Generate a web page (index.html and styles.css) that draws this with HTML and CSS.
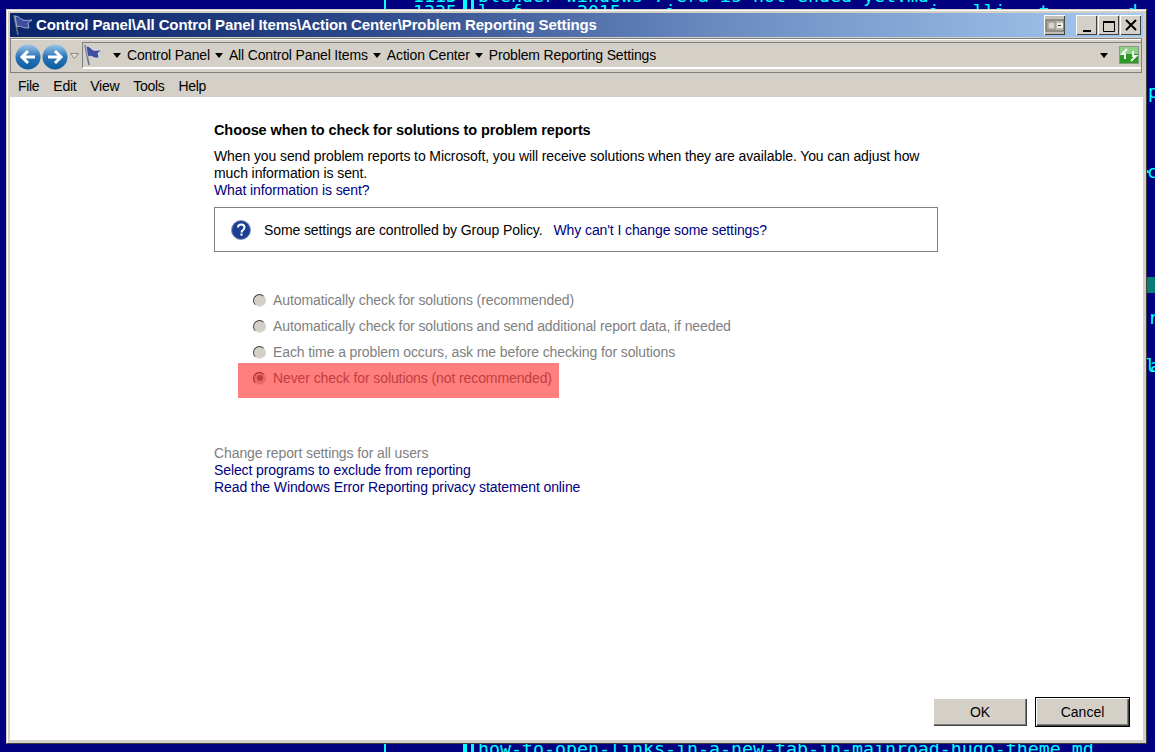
FILE: index.html
```html
<!DOCTYPE html>
<html lang="en">
<head>
<meta charset="utf-8">
<title>Problem Reporting Settings</title>
<link rel="stylesheet" href="styles.css">
</head>
<body>
<div class="term-line row1"><span class="num">1115</span><span class="txt">blender-windows-7-era-is-not-ended-yet.md</span></div>
<div class="term-line row2"><span class="num">1335</span><span class="txt">l  f     2015    i                       i   lli   t       d</span></div>
<div class="term-line row3"><span class="txt">how-to-open-links-in-a-new-tab-in-mainroad-hugo-theme.md</span></div>
<div class="vline v1"></div>
<div class="vline v2"></div>
<div class="vline v3"></div>
<div class="side s1">p</div>
<div class="side s2">·c</div>
<div class="side-block"></div>
<div class="side s3">r</div>
<div class="side s4">la</div>
<div class="window">
  <div class="titlebar">
    <svg class="flag" width="24" height="24" viewBox="0 0 24 24"><path d="M3 2l4 20" stroke="#6a7488" stroke-width="1.5"/><path d="M4 3c4 0 5 3 8 4s5 0 9 0l-4 3 1 5c-3 0-5 0-7-1s-4-1-5 0z" fill="#3c4f9e" stroke="#cfd6ea" stroke-width=".7"/></svg>
    <span class="title">Control Panel\All Control Panel Items\Action Center\Problem Reporting Settings</span>
    <span class="wbtns">
      <span class="sbtn"><svg width="20" height="15" viewBox="0 0 20 15"><rect x="1" y="2" width="18" height="11" fill="#bdb9b0" stroke="#5c5a55"/><rect x="3" y="4" width="7" height="7" fill="#d8d5cc" stroke="#8a8880"/><rect x="12" y="5" width="6" height="5" fill="#eee"/><rect x="13" y="7" width="3" height="1" fill="#333"/></svg></span>
      <span class="capgroup">
      <span class="wbtn"><svg width="12" height="12" viewBox="0 0 12 12"><rect x="2" y="10" width="8" height="2" fill="#000"/></svg></span>
      <span class="wbtn"><svg width="14" height="12" viewBox="0 0 14 12"><path d="M1.5 1.5h11v10h-11z" fill="none" stroke="#000"/><rect x="1" y="1" width="12" height="2" fill="#000"/></svg></span>
      <span class="wbtn closeb"><svg width="12" height="12" viewBox="0 0 12 12"><path d="M1 1l10 10M11 1L1 11" stroke="#000" stroke-width="2"/></svg></span>
      </span>
    </span>
  </div>
  <div class="navbar">
    <span class="navbtn"><svg width="26" height="26" viewBox="0 0 26 26"><defs><linearGradient id="g" x1="0" y1="0" x2="0" y2="1"><stop offset="0" stop-color="#9cc6e8"/><stop offset=".5" stop-color="#2a74b8"/><stop offset="1" stop-color="#0a5ea0"/></linearGradient></defs><circle cx="13" cy="13" r="12.5" fill="url(#g)"/><path d="M20 13H8m5-6l-6 6 6 6" fill="none" stroke="#fff" stroke-width="3"/></svg></span>
    <span class="navbtn"><svg width="26" height="26" viewBox="0 0 26 26"><circle cx="13" cy="13" r="12.5" fill="url(#g)"/><path d="M6 13h12m-5-6l6 6-6 6" fill="none" stroke="#fff" stroke-width="3"/></svg></span>
    <svg class="hist" width="9" height="6" viewBox="0 0 9 6"><path d="M.5.5h8L4.5 5.5z" fill="#e8e6e0" stroke="#8a8880"/></svg>
    <div class="crumbs">
      <svg class="flag2" width="22" height="24" viewBox="0 0 22 24"><path d="M2 2l4 20" stroke="#6a7488" stroke-width="1.5"/><path d="M3 3c4 0 5 3 7 4s5 0 9 0l-4 3 1 5c-3 0-5 0-6-1s-4-1-5 0z" fill="#3c4f9e" stroke="#fff" stroke-width=".5"/></svg>
      <i class="arr"></i><span>Control Panel</span>
      <i class="arr"></i><span>All Control Panel Items</span>
      <i class="arr"></i><span>Action Center</span>
      <i class="arr"></i><span>Problem Reporting Settings</span>
      <i class="arr end"></i>
      <svg class="refresh" width="20" height="18" viewBox="0 0 20 18"><rect x=".5" y=".5" width="19" height="17" fill="#2b9a24" stroke="#8a9a88"/><rect x="1" y="1" width="18" height="7" fill="#8fd184"/><path d="M8 3L3 8h3v5M12 15l5-5h-3V5" fill="none" stroke="#f4f4f4" stroke-width="2"/></svg>
    </div>
  </div>
  <div class="menubar"><span>File</span><span>Edit</span><span>View</span><span>Tools</span><span>Help</span></div>
  <div class="content">
    <main class="main">
      <h1>Choose when to check for solutions to problem reports</h1>
      <p class="intro">When you send problem reports to Microsoft, you will receive solutions when they are available. You can adjust how much information is sent.</p>
      <a class="link">What information is sent?</a>
      <div class="policy">
        <svg width="20" height="20" viewBox="0 0 20 20"><circle cx="10" cy="10" r="9.5" fill="#1c3f94" stroke="#8a97b8"/><path d="M7 7.5c0-4 6.5-4 6.5 0 0 2.5-3 2.5-3 5" fill="none" stroke="#fff" stroke-width="2"/><rect x="9.5" y="13.5" width="2" height="2.2" fill="#fff"/></svg>
        <span class="ptext">Some settings are controlled by Group Policy.</span>
        <a class="link">Why can't I change some settings?</a>
      </div>
      <div class="options">
        <label class="opt"><span class="radio"></span>Automatically check for solutions (recommended)</label>
        <label class="opt"><span class="radio"></span>Automatically check for solutions and send additional report data, if needed</label>
        <label class="opt"><span class="radio"></span>Each time a problem occurs, ask me before checking for solutions</label>
        <label class="opt"><span class="radio on"></span>Never check for solutions (not recommended)<span class="highlight"></span></label>
      </div>
      <div class="links">
        <span class="dis">Change report settings for all users</span>
        <a class="link">Select programs to exclude from reporting</a>
        <a class="link">Read the Windows Error Reporting privacy statement online</a>
      </div>
    </main>
    <div class="buttons"><button class="btn ok">OK</button><button class="btn def">Cancel</button></div>
  </div>
</div>
</body>
</html>
```
FILE: styles.css
```css
* { box-sizing: border-box; }
html, body { margin: 0; height: 100%; }
body { position: relative; width: 1155px; height: 752px; overflow: hidden; background: #000080; font-family: Tahoma, "Liberation Sans", "DejaVu Sans", sans-serif; font-size: 14px; letter-spacing: -.1px; color: #000; }
.term-line, .side { position: absolute; font-family: "DejaVu Sans Mono", monospace; font-size: 18.27px; letter-spacing: 0; color: #00ffff; white-space: pre; line-height: 20px; }
.term-line { left: 413px; }
.term-line .num { display: inline-block; width: 65px; }
.row1 { top: -14px; }
.row2 { top: 2px; }
.row3 { top: 739px; left: 478px; }
.vline { position: absolute; top: 0; height: 752px; background: #00ffff; }
.v1 { left: 384px; width: 2px; }
.v2 { left: 463px; width: 4px; }
.v3 { left: 471px; width: 3px; }
.side { left: 1148px; }
.s1 { top: 82px; }
.s2 { top: 162px; left: 1142px; letter-spacing: -6px; }
.s3 { top: 308px; }
.s4 { top: 356px; left: 1145px; letter-spacing: -6px; }
.side-block { position: absolute; left: 1147px; top: 277px; width: 8px; height: 16px; background: #0a7a7a; }
.window { position: absolute; left: 6px; top: 9px; width: 1141px; height: 735px; background: #d4d0c8; border: 1px solid; border-color: #d4d0c8 #404040 #404040 #d4d0c8; box-shadow: inset 1px 1px 0 #fff; padding: 3px; display: flex; flex-direction: column; }
.titlebar { height: 24px; flex: none; display: flex; align-items: center; background: linear-gradient(90deg, #0a246a 0, #2a4788 30%, #6f8fc4 65%, #a6caf0 100%); padding: 0 2px 0 1px; }
.flag { flex: none; margin-right: 1px; }
.title { color: #fff; font-weight: 700; font-size: 15px; letter-spacing: -.13px; white-space: nowrap; flex: 1; margin-top: -1px; }
.wbtns { display: flex; align-items: center; gap: 11px; }
.capgroup { display: flex; gap: 1px; }
.sbtn { display: flex; align-items: center; justify-content: center; width: 21px; height: 20px; background: #c4c0b8; box-shadow: inset 1px 1px 0 #fff, inset -1px -1px 0 #404040; }
.wbtn { display: flex; align-items: flex-end; justify-content: center; width: 21px; height: 20px; padding-bottom: 3px; background: #d4d0c8; box-shadow: inset 1px 1px 0 #fff, inset -1px -1px 0 #404040; }
.closeb { align-items: center; padding: 0; }
.navbar { height: 35px; margin: 1px 1px 0 0; flex: none; display: flex; align-items: flex-end; padding: 0 0 3px 4px; border: 1px solid #808080; box-shadow: inset 0 1px 0 #fff; }
.navbtn { display: flex; width: 27px; flex: none; margin-bottom: -1px; }
.hist { margin: 0 3px 10px 1px; flex: none; }
.crumbs { flex: 1; height: 27px; display: flex; align-items: center; border-top: 1px solid #808080; border-left: 1px solid #808080; border-bottom: 2px solid #fff; font-size: 14px; letter-spacing: -.15px; white-space: nowrap; }
.flag2 { flex: none; margin-right: 3px; }
.arr { display: inline-block; width: 0; height: 0; border: 4.5px solid transparent; border-top: 5px solid #000; border-bottom: 0; margin: 0 6px 0 5px; flex: none; }
.arr.end { margin-left: auto; margin-right: 11px; }
.refresh { flex: none; margin-right: 2px; }
.menubar { height: 24px; flex: none; display: flex; align-items: center; gap: 14px; padding: 2px 0 0 8px; letter-spacing: -.3px; }
.content { flex: 1; background: #fff; position: relative; display: flex; flex-direction: column; padding: 0 14px 14px 204px; }
.main { flex: 1; width: 724px; padding-top: 25px; }
h1 { margin: 0 0 9px; font-size: 14.5px; line-height: 17px; font-weight: 700; }
.intro { margin: 0; line-height: 17px; width: 720px; }
.link { display: block; color: #000080; line-height: 17px; }
.policy { margin-top: 8px; height: 45px; border: 1px solid #808080; display: flex; align-items: center; padding: 1px 0 0 16px; }
.ptext { margin: 0 11px 0 13px; line-height: 17px; }
.options { margin-top: 35px; padding-left: 39px; color: #808080; display: flex; flex-direction: column; }
.opt { height: 26px; display: flex; align-items: center; position: relative; white-space: nowrap; }
.radio { width: 13px; height: 13px; border-radius: 50%; background: #d4d0c8; border: 1px solid; border-color: #404040 #d4d0c8 #e8e6e0 #404040; margin-right: 7px; flex: none; position: relative; }
.radio.on::after { content: ""; position: absolute; left: 2.5px; top: 2.5px; width: 6px; height: 6px; background: #808080; border-radius: 50%; }
.highlight { position: absolute; left: -15px; top: -2px; width: 321px; height: 35px; background: rgba(255, 0, 0, .5); }
.links { margin-top: 54px; line-height: 17px; }
.dis { display: block; color: #808080; }
.buttons { flex: none; display: flex; justify-content: flex-end; gap: 9px; }
.btn { width: 94px; height: 28px; background: #d4d0c8; font: inherit; color: #000; padding: 0; border: 0; box-shadow: inset 1px 1px 0 #fff, inset -1px -1px 0 #404040, inset -2px -2px 0 #808080; }
.btn.def { width: 93px; box-shadow: 0 0 0 1px #000, inset 1px 1px 0 #fff, inset -1px -1px 0 #404040, inset -2px -2px 0 #808080; }
```
